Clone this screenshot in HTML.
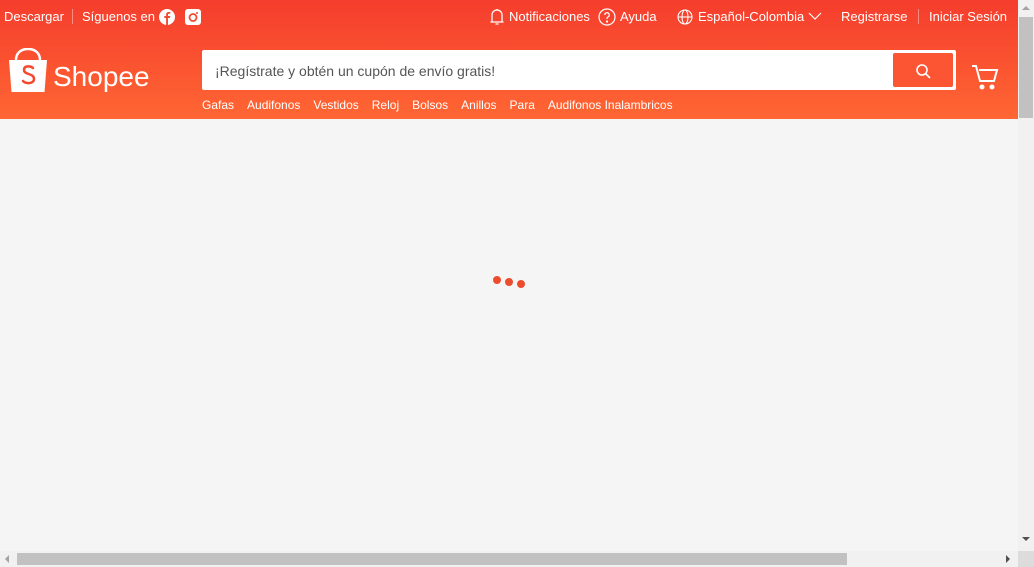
<!DOCTYPE html>
<html><head><meta charset="utf-8"><style>
*{margin:0;padding:0;box-sizing:border-box}
body{width:1034px;height:567px;overflow:hidden;background:#f5f5f5;font-family:"Liberation Sans",Arial,sans-serif;position:relative}
.hdr{position:absolute;left:0;top:0;width:1018px;height:119px;background:linear-gradient(-180deg,#f53d2d,#f63);color:#fff;font-size:13px}
.t{position:absolute;top:9px;white-space:nowrap}
.sep{position:absolute;top:9px;width:1px;height:15px;background:rgba(255,255,255,.4)}
.search{position:absolute;left:202px;top:50px;width:754px;height:40px;background:#fff;border-radius:2px}
.search span{position:absolute;left:13px;top:13px;font-size:14px;color:#555}
.btn{position:absolute;right:3px;top:3px;width:60px;height:34px;background:#fb5533;border-radius:2px}
.links{position:absolute;left:202px;top:98px;font-size:12px;white-space:nowrap}
.links span{margin-right:13px}
.vs{position:absolute;left:1018px;top:0;width:16px;height:567px;background:#f1f1f1}
.hs{position:absolute;left:0;top:551px;width:1018px;height:16px;background:#f1f1f1}
.dot{position:absolute;width:8px;height:8px;border-radius:50%;background:#ee4d2d}
</style></head><body>
<div class="hdr">
<div class="t" style="left:4px">Descargar</div>
<div class="sep" style="left:72px"></div>
<div class="t" style="left:82px">Síguenos en</div>
<svg style="position:absolute;left:159px;top:9px" width="16" height="16"><circle cx="8" cy="8" r="8" fill="#fff"/><path d="M9 16V9h2l.3-2H9V5.8c0-.6.2-1 1-1h1.3V3.1C11 3 10.4 3 9.7 3 8.2 3 7.1 3.9 7.1 5.6V7H5.3v2h1.8v7z" fill="#f24b30"/></svg>
<svg style="position:absolute;left:185px;top:9px" width="16" height="16"><rect width="16" height="16" rx="3" fill="#fff"/><circle cx="8" cy="8.5" r="3.5" fill="none" stroke="#f24b30" stroke-width="1.8"/><circle cx="12" cy="4" r="1" fill="#f24b30"/></svg>
<svg style="position:absolute;left:489px;top:8px" width="16" height="18" fill="none" stroke="#fff" stroke-width="1.3"><path d="M3 14V7a5 5 0 0 1 10 0v7M1.5 14h13M6.5 16h3M8 1v1"/></svg>
<div class="t" style="left:509px">Notificaciones</div>
<svg style="position:absolute;left:598px;top:8px" width="18" height="18" fill="none" stroke="#fff" stroke-width="1.2"><circle cx="9" cy="9" r="8"/><path d="M6.8 7a2.2 2.2 0 1 1 3 2c-.6.3-.8.7-.8 1.4v.6"/><circle cx="9" cy="13.5" r=".5" fill="#fff"/></svg>
<div class="t" style="left:620px">Ayuda</div>
<svg style="position:absolute;left:677px;top:9px" width="16" height="16" fill="none" stroke="#fff" stroke-width="1.1"><circle cx="8" cy="8" r="7"/><ellipse cx="8" cy="8" rx="3" ry="7"/><path d="M1 8h14"/></svg>
<div class="t" style="left:698px">Español-Colombia</div>
<svg style="position:absolute;left:808px;top:12px" width="14" height="9" fill="none" stroke="#fff" stroke-width="1.2"><path d="M1 1l6 6 6-6"/></svg>
<div class="t" style="left:841px">Registrarse</div>
<div class="sep" style="left:918px"></div>
<div class="t" style="left:929px">Iniciar Sesión</div>
<svg style="position:absolute;left:8px;top:48px" width="40" height="46"><path d="M8 12C8 5 13 1 20 1s12 4 12 11" fill="none" stroke="#fff" stroke-width="2.5"/><path d="M1 12h38l-2.5 32H3.5z" fill="#fff"/><path d="M25 20c-2-2-9-3-9 2 0 5 10 3 10 9 0 5-8 5-11 2" fill="none" stroke="#f5492f" stroke-width="2.5" stroke-linecap="round"/></svg>
<div style="position:absolute;left:53px;top:61px;font-size:28px">Shopee</div>
<div class="search"><span>¡Regístrate y obtén un cupón de envío gratis!</span><div class="btn"><svg style="position:absolute;left:22px;top:10px" width="16" height="16" fill="none" stroke="#fff" stroke-width="1.6"><circle cx="7" cy="7" r="5"/><path d="M11 11l4 4"/></svg></div></div>
<svg style="position:absolute;left:971px;top:64px" width="28" height="26" fill="none" stroke="#fff" stroke-width="2"><path d="M1 2h4l4 15h14l3-11H8"/><circle cx="11" cy="23" r="1.5" fill="#fff"/><circle cx="21" cy="23" r="1.5" fill="#fff"/></svg>
<div class="links"><span>Gafas</span><span>Audifonos</span><span>Vestidos</span><span>Reloj</span><span>Bolsos</span><span>Anillos</span><span>Para</span><span>Audifonos Inalambricos</span></div>
</div>
<div class="dot" style="left:493px;top:276px"></div>
<div class="dot" style="left:505px;top:278px"></div>
<div class="dot" style="left:517px;top:280px"></div>
<div class="vs"><div style="position:absolute;left:1px;top:17px;width:14px;height:101px;background:#c1c1c1"></div><div style="position:absolute;left:4px;top:6px;border:4px solid transparent;border-bottom-color:#a3a3a3;border-top:0"></div><div style="position:absolute;left:4px;top:537px;border:4px solid transparent;border-top-color:#505050;border-bottom:0"></div></div>
<div class="hs"><div style="position:absolute;left:17px;top:2px;width:830px;height:12px;background:#c1c1c1"></div><div style="position:absolute;left:5px;top:4px;border:4px solid transparent;border-right-color:#a3a3a3;border-left:0"></div><div style="position:absolute;left:1006px;top:4px;border:4px solid transparent;border-left-color:#505050;border-right:0"></div></div>
<div style="position:absolute;left:1018px;top:551px;width:16px;height:16px;background:#dcdcdc"></div>
</body></html>
